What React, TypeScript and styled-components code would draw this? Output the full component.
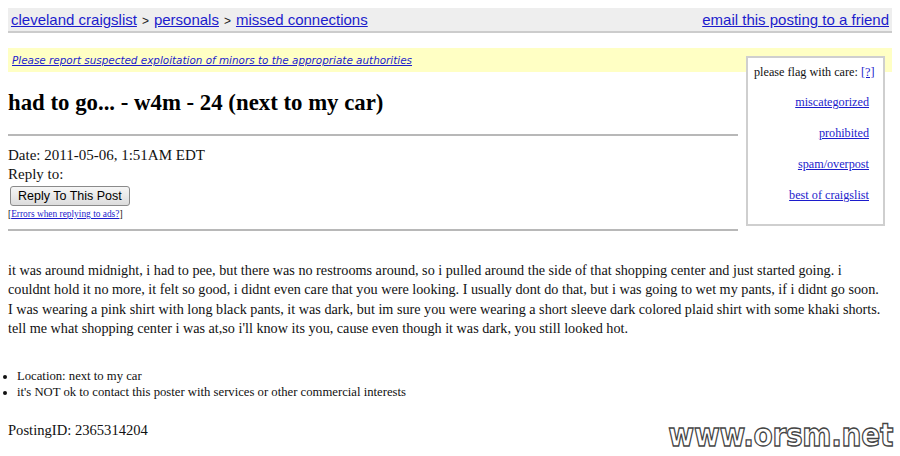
import styled, { createGlobalStyle } from 'styled-components';

const GlobalStyle = createGlobalStyle`
    html, body {
        margin: 0;
        padding: 0;
        background: #fff;
    }
    body {
        font-family: 'Liberation Serif', 'Times New Roman', serif;
        color: #111;
    }
`;

const Page = styled.div`
    position: relative;
    width: 900px;
    height: 456px;
    padding: 8px;
    box-sizing: border-box;
    overflow: hidden;
`;

const TopBar = styled.div`
    display: flex;
    justify-content: space-between;
    align-items: center;
    height: 23px;
    padding: 0 3px 0 3px;
    background: #eeeeee;
    border-bottom: 2px solid #cccccc;
    font-family: 'Liberation Sans', Arial, sans-serif;
    font-size: 15px;
    color: #222;
`;

const Crumbs = styled.div`
    display: flex;
    gap: 5px;
    align-items: baseline;
`;

const Sep = styled.span`
    font-size: 12px;
`;

const Link = styled.a`
    color: #1c1ccc;
    text-decoration: underline;
`;

const Warning = styled.div`
    margin-top: 15px;
    height: 24px;
    padding-left: 4px;
    display: flex;
    align-items: center;
    background: #ffffc4;
    font-family: 'DejaVu Sans', Verdana, sans-serif;
    font-style: italic;
    font-size: 10.4px;
`;

const Main = styled.div`
    display: flex;
    align-items: flex-start;
`;

const Left = styled.div`
    flex: 1;
`;

const Title = styled.h2`
    margin: 18px 0 0 0;
    font-size: 22.8px;
    line-height: 26px;
    font-weight: bold;
    color: #000;
`;

const Rule = styled.hr<{ $top: number }>`
    margin: ${(p) => p.$top}px 0 0 0;
    border: 0;
    height: 2px;
    background: #b8b8b8;
`;

const Meta = styled.div`
    margin-top: 10px;
    font-size: 15px;
    line-height: 19px;
`;

const ReplyButton = styled.button`
    margin: 2px 0 0 2px;
    height: 20px;
    padding: 0 7px;
    font-family: 'Liberation Sans', Arial, sans-serif;
    font-size: 12.5px;
    color: #000;
    background: linear-gradient(#f6f6f6, #dcdcdc);
    border: 1px solid #8a8a8a;
    border-radius: 3px;
`;

const Errors = styled.div`
    margin-top: 2px;
    font-size: 9.4px;
    line-height: 12px;
`;

const FlagBox = styled.div`
    width: 139px;
    height: 170px;
    box-sizing: border-box;
    margin: -16px 7px 0 8px;
    padding: 6px 14px 0 6px;
    background: #fff;
    border: 2px solid #cfcfcf;
    font-size: 12.2px;
    text-align: right;
`;

const FlagHead = styled.div`
    line-height: 16px;
    text-align: left;
    white-space: nowrap;
`;

const FlagList = styled.div`
    margin-top: 14px;
    display: flex;
    flex-direction: column;
    gap: 15px;
    line-height: 16px;
`;

const Body = styled.div`
    margin-top: 30px;
    font-size: 14.2px;
    line-height: 19.3px;
    white-space: nowrap;
`;

const Facts = styled.ul`
    margin: 30px 0 0 0;
    padding-left: 9px;
    font-size: 12.7px;
    line-height: 16px;
`;

const PostingId = styled.div`
    margin-top: 22px;
    font-size: 14.6px;
`;

const Watermark = styled.div`
    position: absolute;
    right: 7px;
    bottom: 4px;
    font-family: 'DejaVu Sans', Verdana, sans-serif;
    font-weight: bold;
    font-size: 28px;
    line-height: 28px;
    letter-spacing: -0.3px;
    color: #fff;
    -webkit-text-stroke: 1.2px #444;
    transform: scaleY(1.12);
    transform-origin: bottom right;
`;

const flags = ['miscategorized', 'prohibited', 'spam/overpost', 'best of craigslist'];

const bodyLines = [
    'it was around midnight, i had to pee, but there was no restrooms around, so i pulled around the side of that shopping center and just started going. i',
    'couldnt hold it no more, it felt so good, i didnt even care that you were looking. I usually dont do that, but i was going to wet my pants, if i didnt go soon.',
    'I was wearing a pink shirt with long black pants, it was dark, but im sure you were wearing a short sleeve dark colored plaid shirt with some khaki shorts.',
    "tell me what shopping center i was at,so i'll know its you, cause even though it was dark, you still looked hot.",
];

export default function App() {
    return (
        <Page>
            <GlobalStyle />
            <TopBar>
                <Crumbs>
                    <Link href="#">cleveland craigslist</Link>
                    <Sep>&gt;</Sep>
                    <Link href="#">personals</Link>
                    <Sep>&gt;</Sep>
                    <Link href="#">missed connections</Link>
                </Crumbs>
                <Link href="#">email this posting to a friend</Link>
            </TopBar>
            <Warning>
                <Link href="#">Please report suspected exploitation of minors to the appropriate authorities</Link>
            </Warning>
            <Main>
                <Left>
                    <Title>had to go... - w4m - 24 (next to my car)</Title>
                    <Rule $top={18} />
                    <Meta>
                        Date: 2011-05-06, 1:51AM EDT
                        <br />
                        Reply to:
                    </Meta>
                    <ReplyButton>Reply To This Post</ReplyButton>
                    <Errors>
                        [<Link href="#">Errors when replying to ads?</Link>]
                    </Errors>
                    <Rule $top={9} />
                </Left>
                <FlagBox>
                    <FlagHead>
                        please flag with care: <Link href="#">[?]</Link>
                    </FlagHead>
                    <FlagList>
                        {flags.map((f) => (
                            <div key={f}>
                                <Link href="#">{f}</Link>
                            </div>
                        ))}
                    </FlagList>
                </FlagBox>
            </Main>
            <Body>
                {bodyLines.map((line) => (
                    <div key={line}>{line}</div>
                ))}
            </Body>
            <Facts>
                <li>Location: next to my car</li>
                <li>it's NOT ok to contact this poster with services or other commercial interests</li>
            </Facts>
            <PostingId>PostingID: 2365314204</PostingId>
            <Watermark>www.orsm.net</Watermark>
        </Page>
    );
}
